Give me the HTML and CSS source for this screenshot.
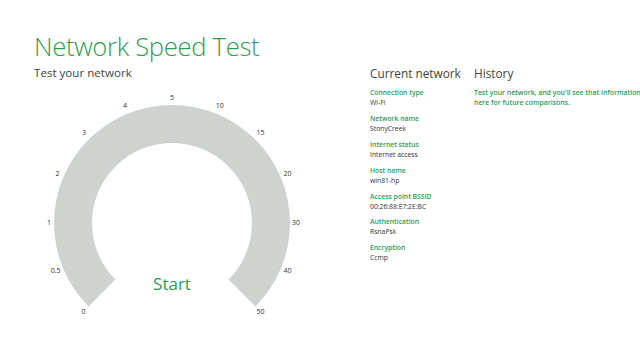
FILE: index.html
```html
<!DOCTYPE html>
<html>
<head>
<meta charset="utf-8">
<link rel="stylesheet" href="styles.css">
</head>
<body>
<div class="page">
  <div class="left">
    <h1 class="title">Network Speed Test</h1>
    <h2 class="subtitle">Test your network</h2>
    <svg class="gauge" width="300" height="235" viewBox="0 0 300 235">
      <path class="arc" d="M 54.56 219.44 A 118 118 0 1 1 221.44 219.44 L 194.57 192.57 A 80 80 0 1 0 81.43 192.57 Z"/>
      <g class="ticks">
        <text x="49.6" y="225.1">0</text>
        <text x="21.6" y="184.2">0.5</text>
        <text x="15" y="136">1</text>
        <text x="23.5" y="87.5">2</text>
        <text x="50" y="46">3</text>
        <text x="91" y="19.5">4</text>
        <text x="138" y="11">5</text>
        <text x="185.8" y="19.5">10</text>
        <text x="226.4" y="46">15</text>
        <text x="253.5" y="87.5">20</text>
        <text x="262" y="136">30</text>
        <text x="253.5" y="184.2">40</text>
        <text x="226.4" y="225.1">50</text>
      </g>
      <text class="start" x="138" y="198">Start</text>
    </svg>
  </div>
  <div class="right">
    <section class="current">
      <h3 class="head">Current network</h3>
      <dl class="props">
        <dt>Connection type</dt><dd>Wi-Fi</dd>
        <dt>Network name</dt><dd>StonyCreek</dd>
        <dt>Internet status</dt><dd>Internet access</dd>
        <dt>Host name</dt><dd>win81-hp</dd>
        <dt>Access point BSSID</dt><dd>00:26:88:E7:2E:BC</dd>
        <dt>Authentication</dt><dd>RsnaPsk</dd>
        <dt>Encryption</dt><dd>Ccmp</dd>
      </dl>
    </section>
    <section class="history">
      <h3 class="head">History</h3>
      <p class="hist-text">Test your network, and you'll see that information show up<br>here for future comparisons.</p>
    </section>
  </div>
</div>
</body>
</html>
```

FILE: styles.css
```css
html, body {
  margin: 0;
  padding: 0;
  background: #ffffff;
  overflow: hidden;
}
body {
  width: 640px;
  height: 351px;
  font-family: "Open Sans", "Noto Sans", sans-serif;
}
.page {
  display: flex;
  padding-left: 34px;
}
.left {
  width: 336px;
  flex: none;
}
.title {
  margin: 0;
  padding-top: 33px;
  font-size: 25.6px;
  line-height: 28px;
  font-weight: 300;
  color: #2f9b55;
  letter-spacing: -0.3px;
}
.subtitle {
  margin: 4px 0 0;
  font-size: 11.6px;
  line-height: 16px;
  font-weight: 400;
  color: #444;
}
.gauge {
  display: block;
  margin-top: 6px;
  overflow: visible;
}
.arc {
  fill: #cfd3cf;
}
.ticks text {
  font-size: 7px;
  fill: #333;
  text-anchor: middle;
  dominant-baseline: middle;
}
.start {
  font-size: 17px;
  fill: #2f9b55;
  text-anchor: middle;
  dominant-baseline: middle;
}
.right {
  display: flex;
  padding-top: 65px;
  flex: none;
}
.current {
  width: 104px;
  flex: none;
}
.head {
  margin: 0;
  font-size: 11.8px;
  line-height: 16px;
  font-weight: 400;
  color: #444;
}
.props {
  margin: 7px 0 0;
}
.props dt {
  font-size: 6.8px;
  line-height: 10px;
  font-weight: 600;
  color: #2f9b55;
}
.props dd {
  margin: 0 0 5.9px;
  font-size: 6.8px;
  line-height: 10px;
  color: #333;
}
.history {
  flex: none;
  width: 300px;
}
.hist-text {
  margin: 7px 0 0;
  font-size: 6.9px;
  line-height: 10px;
  font-weight: 600;
  color: #2f9b55;
  white-space: nowrap;
}
```
